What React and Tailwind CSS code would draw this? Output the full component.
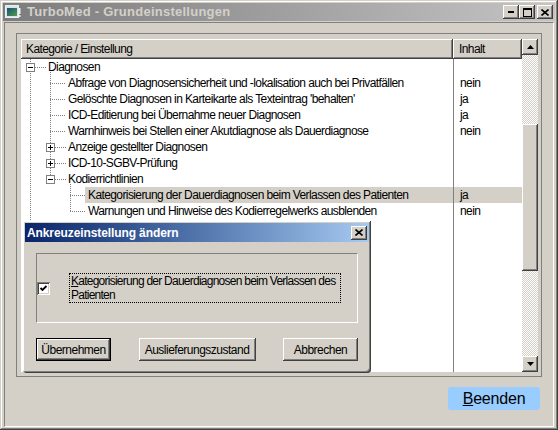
import React from "react";

const rows = [
  { level: 0, label: "Diagnosen" },
  { level: 1, label: "Abfrage von Diagnosensicherheit und -lokalisation auch bei Privatfällen", value: "nein" },
  { level: 1, label: "Gelöschte Diagnosen in Karteikarte als Texteintrag 'behalten'", value: "ja" },
  { level: 1, label: "ICD-Editierung bei Übernahme neuer Diagnosen", value: "ja" },
  { level: 1, label: "Warnhinweis bei Stellen einer Akutdiagnose als Dauerdiagnose", value: "nein" },
  { level: 1, label: "Anzeige gestellter Diagnosen" },
  { level: 1, label: "ICD-10-SGBV-Prüfung" },
  { level: 1, label: "Kodierrichtlinien" },
  { level: 2, label: "Kategorisierung der Dauerdiagnosen beim Verlassen des Patienten", value: "ja", selected: true },
  { level: 2, label: "Warnungen und Hinweise des Kodierregelwerks ausblenden", value: "nein" },
];

const indent = { 0: "pl-[24px]", 1: "pl-[44px]", 2: "pl-[64px]" };

const raised =
  "bg-[#d4d0c8] shadow-[inset_-1px_-1px_#404040,inset_1px_1px_#ffffff,inset_-2px_-2px_#808080,inset_2px_2px_#d4d0c8]";

function TreeLines() {
  // dotted connectors and expander boxes, coordinates relative to the tree body
  const dots = { stroke: "#808080", strokeWidth: 1, strokeDasharray: "1 1" };
  const box = (x, y, open) => (
    <g key={`b${x}-${y}`}>
      <rect x={x + 0.5} y={y + 0.5} width="8" height="8" fill="#fff" stroke="#808080" />
      <line x1={x + 2} y1={y + 4.5} x2={x + 7} y2={y + 4.5} stroke="#000" />
      {!open && <line x1={x + 4.5} y1={y + 2} x2={x + 4.5} y2={y + 7} stroke="#000" />}
    </g>
  );
  const c = (i) => i * 16 + 8.5;
  return (
    <svg className="pointer-events-none absolute left-0 top-0" width="80" height="320">
      <line x1="9.5" y1="0" x2="9.5" y2="320" {...dots} />
      <line x1="14" y1={c(0)} x2="25" y2={c(0)} {...dots} />
      <line x1="29.5" y1="13" x2="29.5" y2={c(7)} {...dots} />
      {[1, 2, 3, 4].map((i) => (
        <line key={i} x1="29" y1={c(i)} x2="45" y2={c(i)} {...dots} />
      ))}
      {[5, 6, 7].map((i) => (
        <line key={i} x1="34" y1={c(i)} x2="45" y2={c(i)} {...dots} />
      ))}
      <line x1="49.5" y1="125" x2="49.5" y2={c(9)} {...dots} />
      {[8, 9].map((i) => (
        <line key={i} x1="49" y1={c(i)} x2="64" y2={c(i)} {...dots} />
      ))}
      {box(5, 4, true)}
      {box(25, 16 * 5 + 4, false)}
      {box(25, 16 * 6 + 4, false)}
      {box(25, 16 * 7 + 4, true)}
    </svg>
  );
}

function Arrow({ down }) {
  return (
    <svg width="7" height="4" viewBox="0 0 7 4">
      <path d={down ? "M0 0h7L3.5 4z" : "M0 4h7L3.5 0z"} fill="#000" />
    </svg>
  );
}

function Scrollbar() {
  return (
    <div className="flex w-[16px] flex-col">
      <div className={`${raised} flex h-[16px] items-center justify-center`}>
        <Arrow />
      </div>
      <div className="h-[69px] bg-[repeating-conic-gradient(#ffffff_0_25%,#d4d0c8_0_50%)] bg-[length:2px_2px]" />
      <div className={`${raised} h-[147px]`} />
      <div className="flex-1 bg-[repeating-conic-gradient(#ffffff_0_25%,#d4d0c8_0_50%)] bg-[length:2px_2px]" />
      <div className={`${raised} flex h-[16px] items-center justify-center`}>
        <Arrow down />
      </div>
    </div>
  );
}

function WinButton({ children, className = "" }) {
  return (
    <div className={`${raised} flex h-[14px] w-[16px] items-center justify-center ${className}`}>
      {children}
    </div>
  );
}

function CloseGlyph() {
  return (
    <svg width="8" height="7" viewBox="0 0 8 7">
      <path d="M0.5 0.5L7.5 6.5M7.5 0.5L0.5 6.5" stroke="#000" strokeWidth="1.6" />
    </svg>
  );
}

function Dialog() {
  return (
    <div className={`${raised} absolute left-[23px] top-[221px] flex h-[152px] w-[348px] flex-col rounded-b-[4px] p-[2px]`}>
      <div className="flex h-[19px] items-center justify-between bg-linear-to-r from-[#0a246a] to-[#a6caf0] pl-[2px] pr-[2px]">
        <span className="text-[12px] font-bold tracking-[-0.1px] text-white">Ankreuzeinstellung ändern</span>
        <WinButton>
          <CloseGlyph />
        </WinButton>
      </div>
      <div className="flex flex-1 flex-col px-[11px] pt-[11px]">
        <div className="flex h-[70px] items-center border border-b-white border-l-[#808080] border-r-white border-t-[#808080]">
          <div className="flex h-[13px] w-[13px] shrink-0 items-center justify-center bg-white shadow-[inset_1px_1px_#808080,inset_-1px_-1px_#ffffff,inset_2px_2px_#404040,inset_-2px_-2px_#d4d0c8]">
            <svg width="9" height="9" viewBox="0 0 9 9">
              <path d="M1.5 4L3.5 6L7.5 2" fill="none" stroke="#000" strokeWidth="1.8" />
            </svg>
          </div>
          <div className="ml-[19px] w-[272px] whitespace-nowrap border border-dotted border-black px-[1px] text-[12px] leading-[14px] tracking-[-0.75px]">
            <span className="underline">K</span>ategorisierung der Dauerdiagnosen beim Verlassen des
            <br />
            Patienten
          </div>
        </div>
        <div className="mt-[15px] flex justify-between">
          <button className={`${raised} h-[23px] w-[75px] border border-black text-[12px] tracking-[-0.5px]`}>
            Übernehmen
          </button>
          <button className={`${raised} h-[23px] w-[117px] text-[12px] tracking-[-0.5px]`}>
            Auslieferungszustand
          </button>
          <button className={`${raised} h-[23px] w-[75px] text-[12px] tracking-[-0.5px]`}>
            Abbrechen
          </button>
        </div>
      </div>
    </div>
  );
}

export default function App() {
  return (
    <div
      className="relative flex h-[430px] w-[558px] flex-col bg-[#d4d0c8] p-[3px] text-black shadow-[inset_-1px_-1px_#404040,inset_1px_1px_#d4d0c8,inset_-2px_-2px_#808080,inset_2px_2px_#ffffff]"
      style={{ fontFamily: '"Liberation Sans", Arial, sans-serif' }}
    >
      {/* title bar */}
      <div className="flex h-[18px] items-center bg-linear-to-r from-[#7c7c7c] to-[#c4c4c4] pl-[2px] pr-[2px]">
        <svg width="16" height="14" viewBox="0 0 16 14">
          <rect x="0.5" y="0.5" width="13" height="12" fill="#d8e4ec" stroke="#e8f0f4" />
          <defs>
            <linearGradient id="ic" x1="0" y1="0" x2="1" y2="1">
              <stop offset="0" stopColor="#1d4f78" />
              <stop offset="1" stopColor="#4f9b4a" />
            </linearGradient>
          </defs>
          <rect x="2" y="3" width="10" height="8" fill="url(#ic)" />
          <rect x="14" y="3" width="1.5" height="6" fill="#f0f0f0" />
          <rect x="14" y="10" width="1.5" height="2" fill="#f0f0f0" />
        </svg>
        <span className="ml-[6px] flex-1 text-[13px] font-bold tracking-[0.25px] text-[#d4d0c8]">
          TurboMed - Grundeinstellungen
        </span>
        <WinButton>
          <svg width="6" height="2">
            <rect width="6" height="2" y="0" fill="#000" />
          </svg>
        </WinButton>
        <WinButton>
          <svg width="9" height="9" viewBox="0 0 9 9">
            <rect x="0.5" y="0.5" width="8" height="8" fill="none" stroke="#000" />
            <rect x="0" y="0" width="9" height="2" fill="#000" />
          </svg>
        </WinButton>
        <WinButton className="ml-[2px]">
          <CloseGlyph />
        </WinButton>
      </div>

      {/* main frame */}
      <div className="ml-[1px] mr-[1px] mt-[1px] flex h-[406px] flex-col border border-b-white border-l-[#808080] border-r-white border-t-[#808080] px-[11px] pt-[10px]">
        <div className="flex h-[344px] flex-col border border-[#808080] pb-[4px] pl-[4px] pr-[3px] pt-[5px]">
          <div className="flex flex-1 bg-white">
            <div className="relative flex flex-1 flex-col overflow-hidden text-[12px] tracking-[-0.6px]">
              <div className="flex h-[20px]">
                <div className={`${raised} flex w-[432px] items-center pl-[5px]`}>Kategorie / Einstellung</div>
                <div className={`${raised} flex flex-1 items-center pl-[6px]`}>Inhalt</div>
              </div>
              <div className="relative flex-1">
                <TreeLines />
                {rows.map((r, i) => (
                  <div key={i} className={`flex h-[16px] ${indent[r.level]}`}>
                    <div className={`flex flex-1 items-center ${r.selected ? "bg-[#d4d0c8]" : ""}`}>
                      <div className="flex-1 whitespace-nowrap pl-[3px] leading-[16px]">{r.label}</div>
                      <div className="w-[68px] pl-[6px] leading-[16px]">{r.value}</div>
                    </div>
                  </div>
                ))}
                <div className="absolute bottom-0 left-[432px] top-0 w-px bg-[#808080]" />
              </div>
            </div>
            <Scrollbar />
          </div>
        </div>
        <div className="mt-[10px] flex justify-end pr-[2px]">
          <button className="h-[23px] w-[92px] rounded-[3px] bg-[#99ccff] text-[16px] tracking-[-0.2px]">
            <span className="underline">B</span>eenden
          </button>
        </div>
      </div>

      <Dialog />
    </div>
  );
}
